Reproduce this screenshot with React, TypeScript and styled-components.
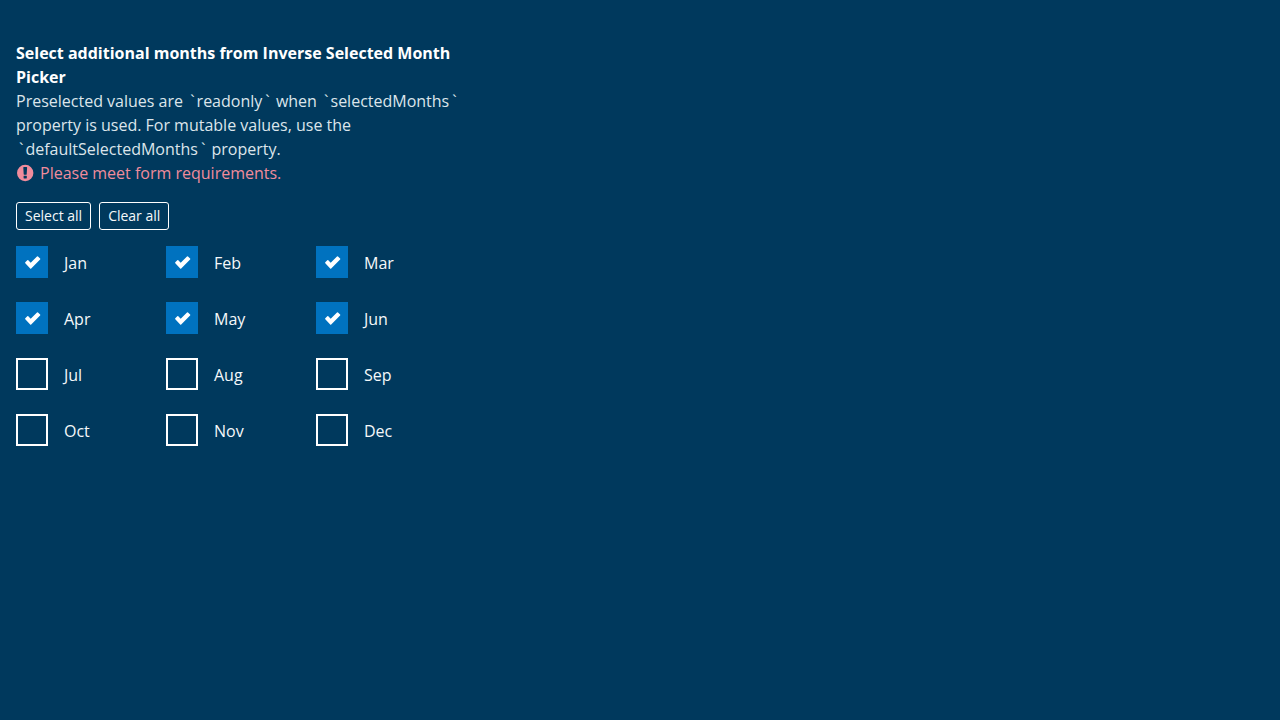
import React, { useState } from "react";
import styled, { createGlobalStyle } from "styled-components";

const GlobalStyle = createGlobalStyle`
  *, *::before, *::after { box-sizing: border-box; }
  body {
    margin: 0;
    background: #00395d;
    color: #ffffff;
    font-family: "Open Sans", "Noto Sans", sans-serif;
    font-size: 16px;
    line-height: 24px;
  }
`;

const Page = styled.main`
  padding: 41px 16px 16px;
`;

const Picker = styled.fieldset`
  max-width: 450px;
  min-width: 0;
  margin: 0;
  padding: 0;
  border: 0;
`;

const Title = styled.legend`
  padding: 0;
  font-weight: 700;
`;

const Description = styled.p`
  margin: 0;
  color: #dce5eb;
`;

const Tick = styled.span`
  padding: 0 2px 0 3px;
`;

const ErrorMessage = styled.p`
  display: flex;
  align-items: center;
  gap: 6px;
  margin: 0;
  color: #f08c9c;
`;

const Actions = styled.div`
  display: flex;
  gap: 8px;
  margin: 17px 0 16px;
`;

const ActionButton = styled.button`
  height: 28px;
  padding: 0 8px;
  border: 1px solid #ffffff;
  border-radius: 3px;
  background: transparent;
  color: #f5f8fa;
  font: inherit;
  font-size: 14px;
  line-height: 24px;
  cursor: pointer;
`;

const MonthGrid = styled.div`
  display: grid;
  grid-template-columns: repeat(3, 1fr);
  row-gap: 24px;
`;

const MonthLabel = styled.label`
  display: flex;
  gap: 16px;
  height: 32px;
  color: #f5f8fa;
  line-height: 34px;
  cursor: pointer;
`;

const BoxFrame = styled.span`
  display: grid;
  width: 32px;
  height: 32px;

  > * { grid-area: 1 / 1; }
`;

const MonthInput = styled.input`
  appearance: none;
  width: 32px;
  height: 32px;
  margin: 0;
  border: 2px solid #ffffff;
  cursor: pointer;

  &:checked {
    border-color: #0072bf;
    background: #0072bf;
  }
`;

const CheckMark = styled.svg`
  width: 32px;
  height: 32px;
  pointer-events: none;
`;

const MONTHS = ["Jan", "Feb", "Mar", "Apr", "May", "Jun", "Jul", "Aug", "Sep", "Oct", "Nov", "Dec"];
const PRESELECTED = MONTHS.slice(0, 6);

function PropName({ children }: { children: string }) {
  return (
    <>
      <Tick>`</Tick>
      {children}
      <Tick>`</Tick>
    </>
  );
}

export default function App() {
  const [selected, setSelected] = useState<string[]>(PRESELECTED);

  const toggle = (month: string) => {
    if (PRESELECTED.includes(month)) return;
    setSelected((now) => (now.includes(month) ? now.filter((m) => m !== month) : [...now, month]));
  };

  return (
    <Page>
      <GlobalStyle />
      <Picker aria-describedby="picker-description picker-error">
        <Title>Select additional months from Inverse Selected Month Picker</Title>
        <Description id="picker-description">
          Preselected values are <PropName>readonly</PropName> when{" "}
          <PropName>selectedMonths</PropName> property is used. For mutable values, use the{" "}
          <PropName>defaultSelectedMonths</PropName> property.
        </Description>
        <ErrorMessage id="picker-error">
          <svg width="18" height="18" viewBox="0 0 18 18" aria-hidden="true">
            <path
              fill="currentColor"
              fillRule="evenodd"
              d="M9.2 .8a8.2 8.2 0 1 1 0 16.4a8.2 8.2 0 0 1 0-16.4ZM7.8 2.9q-.5 0-.5.5l.4 6.9q0 .4.4.4h2.2q.4 0 .4-.4l.4-6.9q0-.5-.5-.5ZM8 11.7q-.4 0-.4.4v2q0 .4.4.4h2.4q.4 0 .4-.4v-2q0-.4-.4-.4Z"
            />
          </svg>
          Please meet form requirements.
        </ErrorMessage>
        <Actions>
          <ActionButton type="button" onClick={() => setSelected(MONTHS)}>Select all</ActionButton>
          <ActionButton type="button" onClick={() => setSelected(PRESELECTED)}>Clear all</ActionButton>
        </Actions>
        <MonthGrid>
          {MONTHS.map((month) => (
            <MonthLabel key={month}>
              <BoxFrame>
                <MonthInput
                  type="checkbox"
                  checked={selected.includes(month)}
                  onChange={() => toggle(month)}
                />
                {selected.includes(month) && (
                  <CheckMark viewBox="0 0 32 32" aria-hidden="true">
                    <path
                      fill="#ffffff"
                      d="M9.3 17.3q-.5-.5 0-1l2-2q.5-.5 1 0l2.4 2.4 6.3-6.3q.5-.5 1 0l2.1 2.1q.5.5 0 1l-8.9 9q-.5.5-1 0Z"
                    />
                  </CheckMark>
                )}
              </BoxFrame>
              {month}
            </MonthLabel>
          ))}
        </MonthGrid>
      </Picker>
    </Page>
  );
}
